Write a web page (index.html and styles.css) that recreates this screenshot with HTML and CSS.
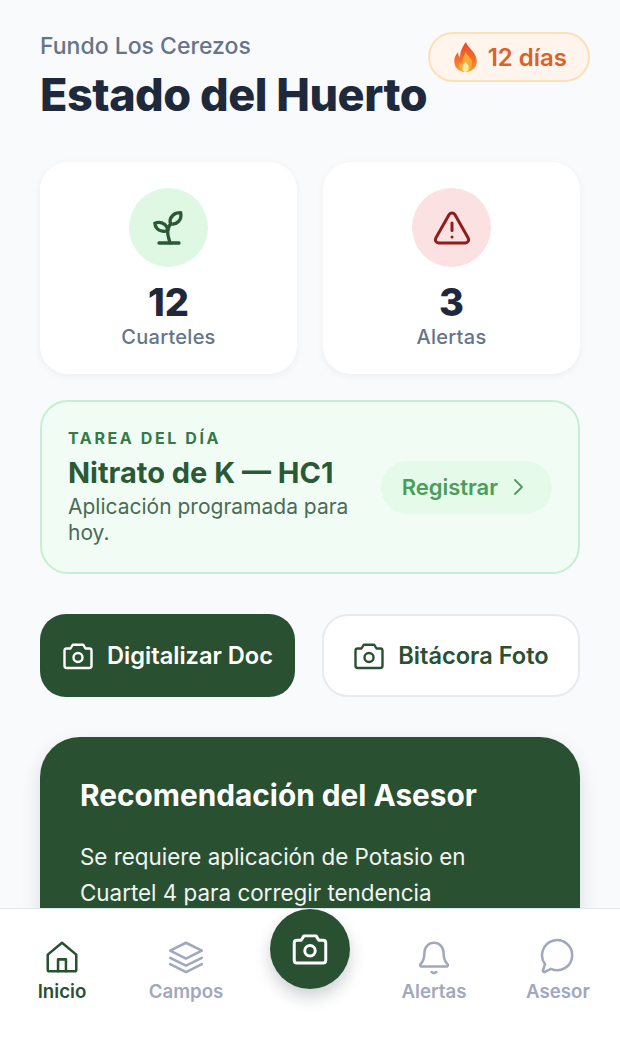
FILE: index.html
```html
<!DOCTYPE html>
<html lang="es">
    <head>
        <meta charset="utf-8">
        <title>Estado del Huerto</title>
        <link rel="stylesheet" href="styles.css">
    </head>
    <body>
        <div class="screen">
            <main class="content">
                <header class="header">
                    <div>
                        <p class="farm-name">Fundo Los Cerezos</p>
                        <h1 class="page-title">Estado del Huerto</h1>
                    </div>
                    <div class="streak">
                        <svg class="flame" viewBox="0 0 24 28">
                            <defs>
                                <linearGradient id="flame-outer" x1="0" y1="0" x2="0" y2="1">
                                    <stop offset="0" stop-color="#e8452c"/>
                                    <stop offset="0.6" stop-color="#f4702c"/>
                                    <stop offset="1" stop-color="#f9a02c"/>
                                </linearGradient>
                            </defs>
                            <path fill="url(#flame-outer)" d="M12.500 0c1 4 5 6.500 7.500 10.500 1 1.600 2.500 4 2.500 7.500C22.500 24 18 28 12 28S1.500 24 1.500 18c0-4 2-7 3.500-8.500 0 2 .5 3.500 2 4.500C7 8 9.500 4 12.500 0z"/>
                            <path fill="#fbab35" d="M12.500 9c.5 3 3.500 4.500 5 7.500 1.500 3.500 0 11.500-5.500 11.500s-7-5-5.500-9c.5 1 1.500 1.500 2.500 1.500C9 16 10.500 12 12.500 9z"/>
                            <path fill="#fdeaa8" d="M12 18c.5 1.500 3 3 3 6 0 2.500-1.500 4-3 4s-3-1.500-3-4c0-2.500 2-4 3-6z"/>
                        </svg>
                        <span>12 días</span>
                    </div>
                </header>

                <section class="stats">
                    <div class="stat-card">
                        <div class="stat-icon stat-icon-green">
                            <svg class="icon-40" viewBox="0 0 24 24" fill="none" stroke="#2a5a35" stroke-width="2" stroke-linecap="round" stroke-linejoin="round">
                                <path d="M6 21h12"/>
                                <path d="M12.500 21c-.3-2.500-1.300-4-1.300-6.500 0-2.500 1-4 1.800-5"/>
                                <path d="M11 13.500C9.500 14.500 6.500 14 5 12.500 3.800 11.300 3.500 10 3.500 9.200c1.800-.8 4.200-.6 5.800.6 1.400 1.200 2 2.500 1.700 3.700z"/>
                                <path d="M13 9.500c-.7-1.500-.2-3.500 1.200-5C15.500 3.200 17.500 2.800 19 2.800c.4 2 0 4-1.300 5.300-1.300 1.300-3 1.900-4.700 1.400z"/>
                            </svg>
                        </div>
                        <div class="stat-value">12</div>
                        <div class="stat-label">Cuarteles</div>
                    </div>
                    <div class="stat-card">
                        <div class="stat-icon stat-icon-red">
                            <svg class="icon-40" viewBox="0 0 24 24" fill="none" stroke="#8f1d1d" stroke-width="1.800" stroke-linecap="round" stroke-linejoin="round">
                                <path d="M10.300 3.900 2.300 18a2 2 0 0 0 1.700 3h16a2 2 0 0 0 1.700-3l-8-14.100a2 2 0 0 0-3.400 0z"/>
                                <path d="M12 9v4.500"/>
                                <path d="M12 17.400h.01"/>
                            </svg>
                        </div>
                        <div class="stat-value">3</div>
                        <div class="stat-label">Alertas</div>
                    </div>
                </section>

                <section class="task-card">
                    <div class="task-text">
                        <div class="task-eyebrow">TAREA DEL DÍA</div>
                        <div class="task-title">Nitrato de K — HC1</div>
                        <p class="task-desc">Aplicación programada para hoy.</p>
                    </div>
                    <div class="task-action">
                        <span>Registrar</span>
                        <svg class="icon-24" viewBox="0 0 24 24" fill="none" stroke="#4a9d5b" stroke-width="1.800" stroke-linecap="round" stroke-linejoin="round">
                            <path d="m9 5 7 7-7 7"/>
                        </svg>
                    </div>
                </section>

                <section class="actions">
                    <div class="action-btn action-btn-dark">
                        <svg class="icon-36" viewBox="0 0 24 24" fill="none" stroke="currentColor" stroke-width="1.600" stroke-linecap="round" stroke-linejoin="round">
                            <path d="M3 8.500A1.500 1.500 0 0 1 4.500 7H7l1.500-2.500h7L17 7h2.500A1.500 1.500 0 0 1 21 8.500v10a1.500 1.500 0 0 1-1.500 1.500h-15A1.500 1.500 0 0 1 3 18.500z"/>
                            <circle cx="12" cy="13" r="3"/>
                        </svg>
                        <span>Digitalizar Doc</span>
                    </div>
                    <div class="action-btn action-btn-light">
                        <svg class="icon-36" viewBox="0 0 24 24" fill="none" stroke="currentColor" stroke-width="1.600" stroke-linecap="round" stroke-linejoin="round">
                            <path d="M3 8.500A1.500 1.500 0 0 1 4.500 7H7l1.500-2.500h7L17 7h2.500A1.500 1.500 0 0 1 21 8.500v10a1.500 1.500 0 0 1-1.500 1.500h-15A1.500 1.500 0 0 1 3 18.500z"/>
                            <circle cx="12" cy="13" r="3"/>
                        </svg>
                        <span>Bitácora Foto</span>
                    </div>
                </section>

                <section class="advice-card">
                    <h2 class="advice-title">Recomendación del Asesor</h2>
                    <p class="advice-text">Se requiere aplicación de Potasio en Cuartel 4 para corregir tendencia</p>
                </section>
            </main>

            <nav class="tabbar">
                <div class="tab tab-active">
                    <svg class="icon-38" viewBox="0 0 24 24" fill="none" stroke="currentColor" stroke-width="1.600" stroke-linecap="round" stroke-linejoin="round">
                        <path d="M3 10.500 12 3l9 7.500V20a1 1 0 0 1-1 1H4a1 1 0 0 1-1-1z"/>
                        <path d="M9.500 21v-7.500h5V21"/>
                    </svg>
                    <span>Inicio</span>
                </div>
                <div class="tab">
                    <svg class="icon-38" viewBox="0 0 24 24" fill="none" stroke="currentColor" stroke-width="1.600" stroke-linecap="round" stroke-linejoin="round">
                        <path d="M12 3 22 8l-10 5L2 8z"/>
                        <path d="m2 12.500 10 5 10-5"/>
                        <path d="m2 16.500 10 5 10-5"/>
                    </svg>
                    <span>Campos</span>
                </div>
                <div class="tab tab-center">
                    <div class="fab">
                        <svg class="icon-42" viewBox="0 0 24 24" fill="none" stroke="#fff" stroke-width="1.700" stroke-linecap="round" stroke-linejoin="round">
                            <path d="M3 8.500A1.500 1.500 0 0 1 4.500 7H7l1.500-2.500h7L17 7h2.500A1.500 1.500 0 0 1 21 8.500v10a1.500 1.500 0 0 1-1.500 1.500h-15A1.500 1.500 0 0 1 3 18.500z"/>
                            <circle cx="12" cy="13" r="3"/>
                        </svg>
                    </div>
                </div>
                <div class="tab">
                    <svg class="icon-38" viewBox="0 0 24 24" fill="none" stroke="currentColor" stroke-width="1.600" stroke-linecap="round" stroke-linejoin="round">
                        <path d="M6 9a6 6 0 0 1 12 0c0 4 1 6 2.500 7.500.5.600.2 1.500-.7 1.500H4.200c-.9 0-1.200-.9-.7-1.500C5 15 6 13 6 9z"/>
                        <path d="M10.500 21.500c.8.600 2.200.6 3 0"/>
                    </svg>
                    <span>Alertas</span>
                </div>
                <div class="tab">
                    <svg class="icon-38" viewBox="0 0 24 24" fill="none" stroke="currentColor" stroke-width="1.600" stroke-linecap="round" stroke-linejoin="round">
                        <path d="M7.500 19.500A9.500 9.500 0 1 0 3.800 16.500L2.500 20.500a.8.800 0 0 0 1 1z"/>
                    </svg>
                    <span>Asesor</span>
                </div>
            </nav>
        </div>
    </body>
</html>
```

FILE: styles.css
```css
* {
    box-sizing: border-box;
}

html, body {
    margin: 0;
    height: 100%;
}

body {
    background: #f8fafc;
    font-family: Inter, "Liberation Sans", sans-serif;
    color: #1e293b;
}

.screen {
    display: flex;
    flex-direction: column;
    height: 1048px;
    overflow: hidden;
}

.content {
    flex: 1;
    min-height: 0;
    overflow: hidden;
    padding: 32px 40px 0 40px;
}

.header {
    display: flex;
    justify-content: space-between;
    align-items: flex-start;
    height: 130px;
}

.farm-name {
    margin: 0;
    font-size: 23px;
    line-height: 28px;
    font-weight: 500;
    color: #64748b;
}

.page-title {
    margin: 8px 0 0 0;
    font-size: 45px;
    line-height: 54px;
    font-weight: 800;
    letter-spacing: -0.5px;
    white-space: nowrap;
    color: #1e293b;
}

.streak {
    display: flex;
    flex: none;
    align-items: center;
    gap: 9px;
    height: 50px;
    margin-right: -10px;
    padding: 0 21px 0 22px;
    border: 2px solid #fde0b8;
    border-radius: 25px;
    background: #fff5ec;
    font-size: 24px;
    font-weight: 600;
    color: #d9622b;
}

.flame {
    width: 27px;
    height: 30px;
}

.stats {
    display: grid;
    grid-template-columns: 1fr 1fr;
    gap: 26px;
}

.stat-card {
    display: flex;
    flex-direction: column;
    align-items: center;
    height: 212px;
    padding-top: 26px;
    border-radius: 28px;
    background: #fff;
    box-shadow: 0 2px 8px rgba(15, 23, 42, 0.05);
}

.stat-icon {
    display: flex;
    align-items: center;
    justify-content: center;
    width: 79px;
    height: 79px;
    border-radius: 50%;
}

.stat-icon-green {
    background: #dff8e3;
}

.stat-icon-red {
    background: #fbe1e1;
}

.stat-value {
    margin-top: 15px;
    font-size: 38px;
    line-height: 40px;
    font-weight: 800;
}

.stat-label {
    margin-top: 1px;
    font-size: 20px;
    line-height: 28px;
    font-weight: 500;
    letter-spacing: 0.25px;
    color: #64748b;
}

.task-card {
    display: flex;
    align-items: center;
    justify-content: space-between;
    height: 174px;
    margin-top: 26px;
    padding: 0 26px;
    border: 2px solid #c5efd0;
    border-radius: 28px;
    background: #f1fdf4;
}

.task-text {
    width: 300px;
}

.task-eyebrow {
    font-size: 16px;
    line-height: 20px;
    font-weight: 700;
    letter-spacing: 2.600px;
    color: #337a45;
}

.task-title {
    margin-top: 7px;
    font-size: 29px;
    line-height: 36px;
    font-weight: 700;
    color: #2a5a35;
}

.task-desc {
    margin: 3px 0 0 0;
    font-size: 21px;
    line-height: 26px;
    color: #4b6b57;
}

.task-action {
    display: flex;
    flex: none;
    align-items: center;
    gap: 8px;
    height: 53px;
    padding: 0 22px 0 21px;
    border-radius: 27px;
    background: #e6fae9;
    font-size: 22px;
    font-weight: 600;
    color: #4a9d5b;
}

.actions {
    display: grid;
    grid-template-columns: 255fr 258fr;
    gap: 27px;
    margin-top: 40px;
}

.action-btn {
    display: flex;
    align-items: center;
    justify-content: center;
    gap: 11px;
    height: 83px;
    padding-right: 2px;
    border-radius: 26px;
    font-size: 23.600px;
    font-weight: 600;
    white-space: nowrap;
}

.action-btn-dark {
    background: #2a5032;
    color: #fff;
}

.action-btn-light {
    border: 2px solid #e7eaef;
    background: #fff;
    color: #2a5032;
}

.advice-card {
    margin-top: 40px;
    padding: 40px;
    border-radius: 40px;
    background: #2a5032;
    box-shadow: 0 8px 20px rgba(15, 23, 42, 0.12);
    color: #fff;
}

.advice-title {
    margin: 0;
    font-size: 29.800px;
    line-height: 36px;
    font-weight: 700;
}

.advice-text {
    margin: 26px 0 0 0;
    font-size: 22.400px;
    line-height: 36px;
    color: #f1f5f2;
}

.tabbar {
    display: grid;
    grid-template-columns: repeat(5, 1fr);
    flex: none;
    height: 140px;
    padding-top: 29px;
    border-top: 1px solid #e2e8f0;
    background: #fff;
}

.tab {
    display: flex;
    flex-direction: column;
    align-items: center;
    gap: 4px;
    font-size: 18.700px;
    line-height: 24px;
    font-weight: 600;
    color: #a0a8c0;
}

.tab-active {
    color: #2a5032;
}

.tab-center {
    margin-top: -29px;
}

.fab {
    display: flex;
    align-items: center;
    justify-content: center;
    width: 80px;
    height: 80px;
    border-radius: 50%;
    background: #2a5032;
    box-shadow: 0 8px 16px rgba(15, 23, 42, 0.2);
}

.icon-24 {
    width: 24px;
    height: 24px;
}

.icon-36 {
    width: 36px;
    height: 36px;
}

.icon-38 {
    width: 38px;
    height: 38px;
}

.icon-40 {
    width: 40px;
    height: 40px;
}

.icon-42 {
    width: 42px;
    height: 42px;
}
```
